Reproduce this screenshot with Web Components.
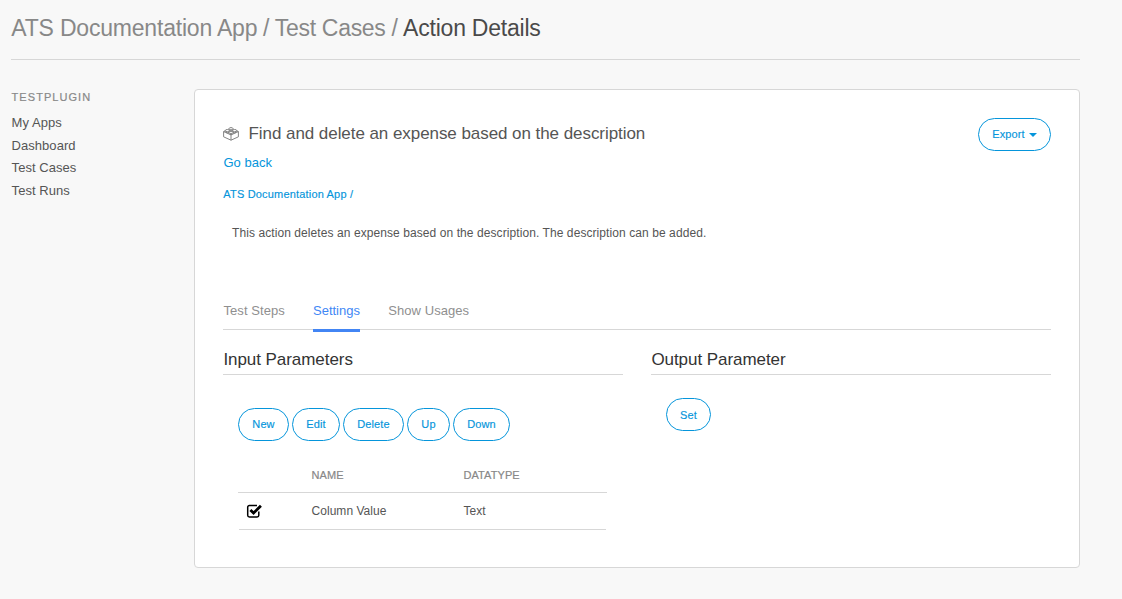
<!DOCTYPE html>
<html lang="en">
<head>
<meta charset="utf-8">
<title>Action Details</title>
<style>
html,body{margin:0;background:#f8f8f8}
body{font-family:"Liberation Sans",Arial,sans-serif;color:#555;font-size:12px}
</style>
</head>
<body>
<ats-page>
  <ats-title slot="title"></ats-title>
  <ats-menu slot="side" heading="TESTPLUGIN" items="My Apps,Dashboard,Test Cases,Test Runs"></ats-menu>
  <ats-card>
    <ats-action-head></ats-action-head>
    <ats-tabs></ats-tabs>
    <ats-columns>
      <ats-section heading="Input Parameters">
        <ats-toolbar>
          <ats-button style="width:51px">New</ats-button><ats-button style="width:48px">Edit</ats-button><ats-button style="width:61px">Delete</ats-button><ats-button style="width:43px">Up</ats-button><ats-button style="width:57px">Down</ats-button>
        </ats-toolbar>
        <ats-param-table></ats-param-table>
      </ats-section>
      <ats-section heading="Output Parameter">
        <ats-toolbar style="padding-top:23px"><ats-button style="width:45px;padding-top:1px">Set</ats-button></ats-toolbar>
      </ats-section>
    </ats-columns>
  </ats-card>
</ats-page>
<script>
const define = (name, html, init) => customElements.define(name, class extends HTMLElement {
  constructor() {
    super();
    this.attachShadow({mode: 'open'}).innerHTML = html;
  }
  connectedCallback() { if (init) init(this, this.shadowRoot); }
});

define('ats-page', `<style>
:host{display:block;box-sizing:border-box;width:1122px;height:599px;padding:0 42px 0 11px;overflow:hidden;background:#f8f8f8}
.body{display:grid;grid-template-columns:183px 886px;padding-top:29px}
</style><slot name="title"></slot><div class="body"><slot name="side"></slot><slot></slot></div>`);

define('ats-title', `<style>
:host{display:block;box-sizing:border-box;height:60px;border-bottom:1px solid #d7d7d7;padding:14px 0 0 .3px;font-size:23px;line-height:28px;letter-spacing:-.2px;color:#888;white-space:pre}
.sep{letter-spacing:-.55px}
.mid{letter-spacing:-.3px}
b{font-weight:400;color:#4a4a4a;letter-spacing:-.22px}
</style><span>ATS Documentation App</span><span class="sep"> / </span><span class="mid">Test Cases</span><span class="sep"> / </span><b>Action Details</b>`);

define('ats-menu', `<style>
:host{display:block;padding-left:.6px}
h2{margin:0 0 7px;font-size:11px;line-height:16px;font-weight:400;letter-spacing:1.05px;color:#888;-webkit-text-stroke:.2px #888}
a{display:block;font-size:13px;line-height:22.6px;letter-spacing:.04px;color:#555}
</style><h2></h2><nav></nav>`, (el, root) => {
  root.querySelector('h2').textContent = el.getAttribute('heading');
  root.querySelector('nav').replaceChildren(...el.getAttribute('items').split(',').map(t => {
    const a = document.createElement('a');
    a.textContent = t;
    return a;
  }));
});

define('ats-card', `<style>
:host{display:block;box-sizing:border-box;height:479px;padding:28px;background:#fff;border:1px solid #d7d7d7;border-radius:4px}
</style><slot></slot>`);

define('ats-action-head', `<style>
:host{display:block}
.row{display:flex;justify-content:space-between;height:33px}
h1{display:flex;align-items:center;gap:9.5px;margin:0;height:32px;font-size:17px;letter-spacing:-.06px;font-weight:400;color:#555}
h1 svg{display:block}
.caret{width:0;height:0;border:4px solid transparent;border-top-color:#0595db;border-bottom:0;margin-left:4px}
.back{font-size:13px;line-height:16px;margin:4px 0 0 .5px;color:#0595db}
.crumb{font-size:11px;line-height:14px;letter-spacing:.18px;margin:16px 0 0 .3px;color:#0595db;-webkit-text-stroke:.15px #0595db}
p{margin:24px 0 0 9px;font-size:12px;line-height:16px;letter-spacing:.08px;color:#555}
.btn{width:73px}
</style>
<div class="row"><h1><svg width="16" height="14" viewBox="0 0 16 14" fill="none" stroke="#777" stroke-width=".9"><path d="M.6 4.600v5.200L8 13.200l7.400-3.400V4.600M.6 4.600 8 7.900l7.400-3.300M8 7.900v5.300M.6 4.600 3 3.400M15.400 4.600 13 3.400"/><g fill="#fff"><path d="M6 1.700v1.200c0 1.200 4 1.200 4 0V1.700"/><ellipse cx="8" cy="1.700" rx="2" ry="1.100"/><path d="M2.300 3.600v1.200c0 1.200 4 1.200 4 0V3.600"/><ellipse cx="4.300" cy="3.600" rx="2" ry="1.100"/><path d="M9.700 3.600v1.200c0 1.200 4 1.200 4 0V3.600"/><ellipse cx="11.700" cy="3.600" rx="2" ry="1.100"/><path d="M6 5.400v1.200c0 1.200 4 1.200 4 0V5.400"/><ellipse cx="8" cy="5.400" rx="2" ry="1.100"/></g></svg><span>Find and delete an expense based on the description</span></h1>
<ats-button class="btn">Export<span class="caret"></span></ats-button></div>
<div class="back">Go back</div>
<div class="crumb">ATS Documentation App /</div>
<p>This action deletes an expense based on the description. The description can be added.</p>`);

define('ats-button', `<style>
:host{display:inline-flex;box-sizing:border-box;height:33px;align-items:center;justify-content:center;border:1px solid #0595db;border-radius:17px;background:#fff;color:#0595db;font-size:11px;line-height:13px;letter-spacing:.1px;-webkit-text-stroke:.15px #0595db}
</style><slot></slot>`);

define('ats-tabs', `<style>
:host{display:flex;gap:28px;height:30px;margin-top:59px;border-bottom:1px solid #d7d7d7;font-size:13px;line-height:22px;letter-spacing:.06px;color:#8f8f8f;box-sizing:border-box}
span{height:30px;white-space:nowrap}
.first{width:61.5px;padding-left:.5px}
.on{width:47px;letter-spacing:0;color:#3f87f5;border-bottom:3px solid #4285f4;height:29px}
.last{padding-left:.3px}
</style><span class="first">Test Steps</span><span class="on">Settings</span><span class="last">Show Usages</span>`);

define('ats-columns', `<style>
:host{display:grid;grid-template-columns:400px 400px;gap:28px;padding-top:19px}
</style><slot></slot>`);

define('ats-section', `<style>
:host{display:block}
h3{margin:0;padding-left:.4px;height:26px;box-sizing:border-box;border-bottom:1px solid #d7d7d7;font-size:17px;letter-spacing:-.06px;line-height:21px;font-weight:400;color:#333}
.in{padding:0 16px 0 15px}
</style><h3></h3><div class="in"><slot></slot></div>`, (el, root) => {
  root.querySelector('h3').textContent = el.getAttribute('heading');
});

define('ats-toolbar', `<style>
:host{display:flex;gap:3px;padding-top:33px}
</style><slot></slot>`);

define('ats-param-table', `<style>
:host{display:block;margin-top:17px}
.r{display:grid;grid-template-columns:73.500px 152px 1fr;align-items:center;box-sizing:border-box;border-bottom:1px solid #d7d7d7}
.h{height:35px;font-size:11px;letter-spacing:.08px;color:#888;-webkit-text-stroke:.2px #888}
.d{height:37px;font-size:12px;letter-spacing:.04px;color:#555;margin:0 1px;grid-template-columns:72.500px 152px 1fr}
svg{display:block;margin-left:7px}
</style><div class="r h"><i></i><span>NAME</span><span>DATATYPE</span></div>
<div class="r d"><svg width="17" height="14" viewBox="0 0 17 14" fill="none" stroke="#000"><path d="M12.800 7.500v3.800a1.700 1.700 0 0 1-1.700 1.700H3.400A1.700 1.700 0 0 1 1.700 11.300V3.200a1.700 1.700 0 0 1 1.700-1.700h7.600" stroke-width="1.500"/><path d="m4.400 5.900 3.200 3.100 7.300-7.200" stroke-width="2.800"/></svg><span>Column Value</span><span>Text</span></div>`);
</script>
</body>
</html>
